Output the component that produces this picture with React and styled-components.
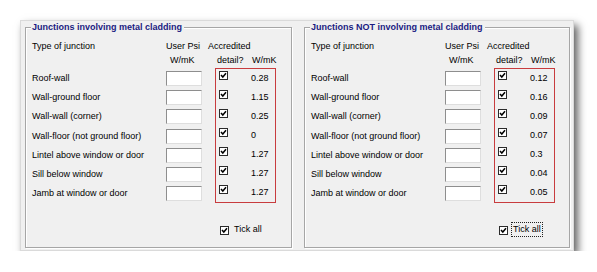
import React from 'react';
import styled, { createGlobalStyle } from 'styled-components';

const GlobalStyle = createGlobalStyle`
    body {
        margin: 0;
        background: #ffffff;
        font-family: "Liberation Sans", Arial, sans-serif;
        font-size: 9px;
        color: #000;
    }
`
const Page = styled.div`
    padding: 20px 0 0 20px;
`
const Panel = styled.div`
    box-sizing: border-box;
    width: 554px;
    height: 231px;
    display: flex;
    gap: 12px;
    padding: 6px 0 0 4px;
    background: #f0f0f0;
    border: 1px solid #dadada;
    box-shadow: 4px 5px 8px rgba(0, 0, 0, 0.62);
`
const Group = styled.div`
    position: relative;
    box-sizing: border-box;
    width: ${p => p.width}px;
    height: 221px;
    padding: 11px 0 0 6px;
    border: 1px solid #a6a6a6;
    box-shadow: inset 1px 1px 0 #fff, 1px 1px 0 #fff;
`
const Legend = styled.span`
    position: absolute;
    top: -7px;
    left: 5px;
    padding: 0 2px 0 1px;
    background: #f0f0f0;
    font-weight: bold;
    color: #1b1b82;
    line-height: 13px;
`
const Header = styled.div`
    display: grid;
    grid-template-columns: 134px 42px 44px auto;
    grid-auto-rows: 14px;
    line-height: 14px;
    white-space: nowrap;
`
const HeadCell = styled.span`
    padding-left: ${p => p.indent || 0}px;
    grid-column: ${p => p.span || 'auto'};
`
const Body = styled.div`
    display: flex;
    align-items: flex-start;
    margin-top: 2px;
`
const Rows = styled.div`
    display: grid;
    grid-template-columns: 134px 36px;
    grid-auto-rows: 19.2px;
    align-items: center;
`
const Label = styled.span`
    line-height: 19px;
    white-space: nowrap;
`
const Input = styled.div`
    box-sizing: border-box;
    width: 36px;
    height: 15px;
    background: #fff;
    border: 1px solid;
    border-color: #8e8e8e #dedede #dedede #8e8e8e;
`
const RedBox = styled.div`
    display: grid;
    grid-template-columns: 9px auto;
    grid-auto-rows: 19px;
    column-gap: 23px;
    width: 61px;
    margin: -1px 0 0 13px;
    padding-left: 3px;
    box-sizing: border-box;
    border: 1px solid #c83c3e;
`
const Value = styled.span`
    line-height: 19px;
`
const BoxWrap = styled.span`
    display: block;
    width: 9px;
    height: 9px;
    margin-top: 2px;
`
const TickRow = styled.div`
    display: flex;
    align-items: center;
    gap: 5px;
    margin: 21px 0 0 188px;
`
const TickText = styled.span`
    line-height: 11px;
    outline: ${p => (p.focus ? '1px dotted #222' : 'none')};
    outline-offset: 1px;
`

const Check = () => (
    <BoxWrap>
        <svg width="9" height="9" viewBox="0 0 9 9">
            <rect x="0.5" y="0.5" width="8" height="8" fill="#fff" stroke="#2b2b2b" />
            <path d="M2 4 L3.8 6 L7 2.2" fill="none" stroke="#000" strokeWidth="1.5" />
        </svg>
    </BoxWrap>
)

const junctions = [
    'Roof-wall',
    'Wall-ground floor',
    'Wall-wall (corner)',
    'Wall-floor (not ground floor)',
    'Lintel above window or door',
    'Sill below window',
    'Jamb at window or door',
]

const JunctionGroup = ({ title, values, width, focus }) => (
    <Group width={width}>
        <Legend>{title}</Legend>
        <Header>
            <HeadCell>Type of junction</HeadCell>
            <HeadCell>User Psi</HeadCell>
            <HeadCell span="3 / 5">Accredited</HeadCell>
            <HeadCell />
            <HeadCell indent={4}>W/mK</HeadCell>
            <HeadCell indent={9}>detail?</HeadCell>
            <HeadCell>W/mK</HeadCell>
        </Header>
        <Body>
            <Rows>
                {junctions.map(name => (
                    <React.Fragment key={name}>
                        <Label>{name}</Label>
                        <Input />
                    </React.Fragment>
                ))}
            </Rows>
            <RedBox>
                {values.map((v, i) => (
                    <React.Fragment key={i}>
                        <Check />
                        <Value>{v}</Value>
                    </React.Fragment>
                ))}
            </RedBox>
        </Body>
        <TickRow>
            <Check />
            <TickText focus={focus}>Tick all</TickText>
        </TickRow>
    </Group>
)

export default function App() {
    return (
        <Page>
            <GlobalStyle />
            <Panel>
                <JunctionGroup
                    title="Junctions involving metal cladding"
                    width={267}
                    values={['0.28', '1.15', '0.25', '0', '1.27', '1.27', '1.27']}
                />
                <JunctionGroup
                    title="Junctions NOT involving metal cladding"
                    width={266}
                    focus
                    values={['0.12', '0.16', '0.09', '0.07', '0.3', '0.04', '0.05']}
                />
            </Panel>
        </Page>
    );
}
